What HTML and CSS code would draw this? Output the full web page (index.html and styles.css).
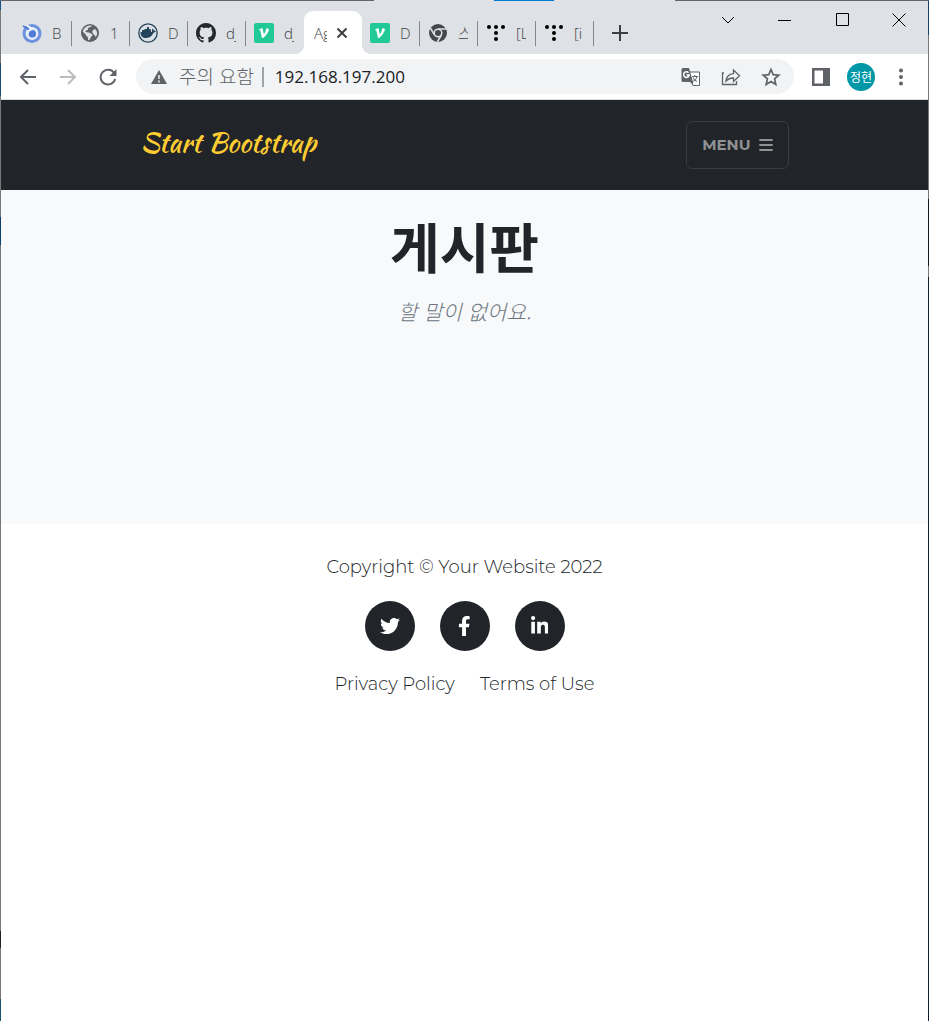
FILE: index.html
```html
<!DOCTYPE html>
<html lang="ko">
<head>
<meta charset="utf-8">
<meta name="viewport" content="width=device-width, initial-scale=1">
<title>Agency</title>
<link rel="stylesheet" href="styles.css">
</head>
<body>
<svg class="defs" aria-hidden="true">
  <symbol id="velog" viewBox="0 0 20 20"><rect width="20" height="20" rx="2" fill="#20c997"/><path d="M5.300 6.200 8.500 5l1.300 6.200c1.400-1.700 2.100-3 2-4.100-.1-1 .5-1.900 1.500-1.900 1.200 0 1.800.8 1.500 2.100-.5 2.400-2.700 5.100-5.600 7.700l-1.200.1-1.700-7.900-1.200.1z" fill="#fff"/></symbol>
  <symbol id="tistory" viewBox="0 0 20 20"><g fill="#000"><circle cx="3" cy="4" r="2"/><circle cx="10" cy="4" r="2"/><circle cx="17" cy="4" r="2"/><circle cx="10" cy="10" r="2"/><circle cx="10" cy="16" r="2"/></g></symbol>
</svg>
<div class="window">
  <header class="tabstrip">
    <nav class="tabs" aria-label="Tabs">
      <div class="tab divided"><svg viewBox="0 0 20 20" fill="none"><circle cx="10" cy="10.500" r="8" stroke="#6c92df" stroke-width="3"/><circle cx="10" cy="10.500" r="6" fill="#e8effc"/><path d="M7.500 8.500l3-1.500a3.800 3.800 0 1 1-4 4.500z" fill="#4f7bd6"/><path d="M1 3l6 3.500" stroke="#4f7bd6" stroke-width="2"/><path d="M9 5L5 2.500" stroke="#fff" stroke-width="1.500"/></svg><span>B</span></div>
      <div class="tab divided"><svg viewBox="0 0 20 20"><circle cx="10" cy="10" r="9" fill="#5f6368"/><path d="M12 2.800c-1 2-4 1-4 3.200 0 2-2.500.8-2.500 2.500 0 1.200 3.200.3 4.500 1.500s2.500.6 2.500 2-2 1.500-2 3-1.500 2-2.500 2.300V15c0-1.500-2-1.500-2-3L2.800 8.500a7.500 7.500 0 0 1 9.200-5.700zM14 6.500c1.500-.8 2.200.5 3 2.500.3 2 .2 3-1.500 5-.4-2-1.500-2-2.500-3.500s-1-3 1-4z" fill="#dee1e6"/></svg><span>1</span></div>
      <div class="tab divided"><svg viewBox="0 0 20 20"><circle cx="10" cy="10" r="9.200" fill="none" stroke="#24445c" stroke-width="1.300"/><path d="M2.500 9h11c.8-.2.800-1.500.3-2.500l.8-.8c1 .6 1.200 1.300 1.300 2 .8-.2 1.500 0 2 .4-.4 1-1.200 1.500-2.500 1.600C14 13.500 11.500 15 8 15c-3.600 0-5.500-2-5.500-6zM4 7h9v2H4zM6.500 6h6v1h-6zM9 4h2v2H9z" fill="#24445c"/></svg><span>D</span></div>
      <div class="tab divided"><svg viewBox="0 0 16 16"><path fill="#24292f" d="M8 0C3.580 0 0 3.580 0 8c0 3.540 2.290 6.530 5.470 7.590.4.070.55-.17.55-.38 0-.19-.01-.82-.01-1.490-2.010.37-2.530-.49-2.690-.94-.09-.23-.48-.94-.82-1.130-.28-.15-.68-.52-.01-.53.63-.01 1.080.58 1.230.82.72 1.210 1.870.87 2.330.66.070-.52.28-.87.51-1.070-1.780-.2-3.640-.89-3.640-3.950 0-.87.31-1.590.82-2.150-.08-.2-.36-1.020.08-2.120 0 0 .67-.21 2.200.82.64-.18 1.320-.27 2-.27s1.360.09 2 .27c1.530-1.040 2.200-.82 2.200-.82.44 1.100.16 1.920.08 2.120.51.56.82 1.270.82 2.150 0 3.070-1.870 3.750-3.650 3.950.29.25.54.73.54 1.480 0 1.070-.01 1.930-.01 2.200 0 .21.15.46.55.38A8.010 8.010 0 0 0 16 8c0-4.420-3.580-8-8-8z"/></svg><span>dj</span></div>
      <div class="tab"><svg><use href="#velog"/></svg><span>dj</span></div>
      <div class="tab active"><span>Ag</span><button type="button" aria-label="Close tab"><svg class="close" viewBox="0 0 12 12"><path d="M1.500 1.500l9 9m0-9l-9 9" stroke="#3c4043" stroke-width="2"/></svg></button></div>
      <div class="tab divided"><svg><use href="#velog"/></svg><span>D</span></div>
      <div class="tab divided"><svg viewBox="0 0 20 20"><circle cx="10" cy="10" r="9" fill="#45494d"/><circle cx="10" cy="10" r="3.800" fill="none" stroke="#dee1e6" stroke-width="1.500"/><path d="M10 6h8.300M6.600 12L2.300 5M13.400 12l-4.100 7" stroke="#dee1e6" stroke-width="1.500"/></svg><span>스</span></div>
      <div class="tab divided"><svg><use href="#tistory"/></svg><span>[L</span></div>
      <div class="tab divided"><svg><use href="#tistory"/></svg><span>[i</span></div>
      <button type="button" class="newtab" aria-label="New tab"><svg viewBox="0 0 16 16"><path d="M8 0v16M0 8h16" stroke="#3c4043" stroke-width="2"/></svg></button>
    </nav>
    <div class="controls">
      <button type="button" aria-label="Search tabs"><svg viewBox="0 0 14 14"><path d="M1 4l6 6 6-6"/></svg></button>
      <button type="button" aria-label="Minimize"><svg viewBox="0 0 14 14"><path d="M0 7.500h13"/></svg></button>
      <button type="button" aria-label="Maximize"><svg viewBox="0 0 14 14"><path d="M1.500.5h12v12h-12z"/></svg></button>
      <button type="button" aria-label="Close"><svg viewBox="0 0 14 14"><path d="M.5.5l13 13m0-13l-13 13"/></svg></button>
    </div>
  </header>
  <div class="toolbar">
    <div class="history">
      <button type="button" aria-label="Back"><svg viewBox="0 0 18 18"><path d="M17 9H2M9 2L2 9l7 7" fill="none" stroke="#5f6368" stroke-width="2"/></svg></button>
      <button type="button" aria-label="Forward" disabled><svg viewBox="0 0 18 18"><path d="M1 9h15M9 2l7 7-7 7" fill="none" stroke="#babcbe" stroke-width="2"/></svg></button>
      <button type="button" aria-label="Reload"><svg viewBox="0 0 18 18"><path d="M15.200 5A7.400 7.400 0 1 0 16.200 11" fill="none" stroke="#5f6368" stroke-width="2"/><path d="M17.500 1v7h-7z" fill="#5f6368"/></svg></button>
    </div>
    <div class="address">
      <svg class="warn" viewBox="0 0 16 14"><path d="M8 0l8 14H0z" fill="#5f6368"/><path d="M8 5v4M8 10.500v2" stroke="#f1f3f4" stroke-width="1.500"/></svg>
      <label for="url">주의 요함</label>
      <input id="url" type="text" value="192.168.197.200">
      <button type="button" aria-label="Translate"><svg viewBox="0 0 20 20"><path d="M8 5h10.500v13.500H12L8 5z" fill="#fff" stroke="#5f6368"/><path d="M2 1h6l4 14H2a1.500 1.500 0 0 1-1.500-1.500v-11A1.500 1.500 0 0 1 2 1z" fill="#5f6368"/><path d="M7.500 5.700A2.800 2.800 0 1 0 8.200 8H5.500" fill="none" stroke="#fff" stroke-width="1.500"/><path d="M11 9.500h6M13.800 8v1.500M16 9.500q-1 4-4 5M12 10.500q1 3 4 4" fill="none" stroke="#5f6368"/><path d="M9 15h3v3z" fill="#5f6368"/></svg></button>
      <button type="button" aria-label="Share"><svg viewBox="0 0 20 20"><path d="M3 6H1.500v11.500h14V14M5 14c.5-4.500 3-7 7.500-7.300V3l6 5.800-6 5.700V11C9 10.900 6.800 12 5 14z" fill="none" stroke="#5f6368" stroke-width="1.300"/></svg></button>
      <button type="button" aria-label="Bookmark"><svg viewBox="0 0 20 20"><path d="M10 2.500l2.200 5.200 5.600.5-4.200 3.700 1.200 5.500-4.800-2.900-4.800 2.900 1.200-5.500-4.200-3.700 5.600-.5z" fill="none" stroke="#5f6368" stroke-width="1.700"/></svg></button>
    </div>
    <div class="tools">
      <button type="button" aria-label="Side panel"><svg viewBox="0 0 18 18"><path d="M0 0h18v18H0zM2.500 2.500v13H11v-13z" fill="#5f6368" fill-rule="evenodd"/></svg></button>
      <button type="button" class="avatar">정현</button>
      <button type="button" aria-label="More"><svg viewBox="0 0 18 18" fill="#5f6368"><circle cx="9" cy="2.500" r="2"/><circle cx="9" cy="9" r="2"/><circle cx="9" cy="15.500" r="2"/></svg></button>
    </div>
  </div>
  <main class="page">
    <nav class="navbar">
      <div class="container">
        <a class="brand" href="#">Start Bootstrap</a>
        <button type="button" class="menu">MENU <svg viewBox="0 0 14 14"><path d="M1 2h12M1 7h12M1 12h12" stroke="currentColor" stroke-width="1.800" stroke-linecap="round"/></svg></button>
      </div>
    </nav>
    <section class="board">
      <h1>게시판</h1>
      <p>할 말이 없어요.</p>
    </section>
    <footer class="footer">
      <p>Copyright © Your Website 2022</p>
      <div class="social">
        <a href="#" aria-label="Twitter"><svg viewBox="0 0 512 512"><path d="M459.370 151.716c.325 4.548.325 9.097.325 13.645 0 138.720-105.583 298.558-298.558 298.558-59.452 0-114.680-17.219-161.137-47.106 8.447.974 16.568 1.299 25.340 1.299 49.055 0 94.213-16.568 130.274-44.832-46.132-.975-84.792-31.188-98.112-72.772 6.498.974 12.995 1.624 19.818 1.624 9.421 0 18.843-1.300 27.614-3.573-48.081-9.747-84.143-51.980-84.143-102.985v-1.299c13.969 7.797 30.214 12.670 47.431 13.319-28.264-18.843-46.781-51.005-46.781-87.391 0-19.492 5.197-37.360 14.294-52.954 51.655 63.675 129.300 105.258 216.365 109.807-1.624-7.797-2.599-15.918-2.599-24.040 0-57.828 46.782-104.934 104.934-104.934 30.213 0 57.502 12.670 76.670 33.137 23.715-4.548 46.456-13.320 66.599-25.340-7.798 24.366-24.366 44.833-46.132 57.827 21.117-2.273 41.584-8.122 60.426-16.243-14.292 20.791-32.161 39.308-52.628 54.253z"/></svg></a>
        <a href="#" aria-label="Facebook"><svg viewBox="0 0 320 512"><path d="M279.140 288l14.220-92.660h-88.910v-60.130c0-25.350 12.420-50.060 52.240-50.060h40.420V6.260S260.430 0 225.360 0c-73.220 0-121.080 44.380-121.080 124.720v70.620H22.890V288h81.390v224h100.170V288z"/></svg></a>
        <a href="#" aria-label="LinkedIn"><svg viewBox="0 0 448 512"><path d="M100.280 448H7.400V148.900h92.880zM53.790 108.100C24.090 108.100 0 83.500 0 53.800a53.790 53.790 0 0 1 107.580 0c0 29.700-24.100 54.300-53.790 54.300zM447.900 448h-92.680V302.400c0-34.700-.7-79.200-48.290-79.200-48.290 0-55.690 37.700-55.690 76.700V448h-92.780V148.900h89.080v40.800h1.300c12.400-23.500 42.690-48.300 87.880-48.300 94 0 111.280 61.900 111.280 142.300V448z"/></svg></a>
      </div>
      <div class="legal"><a href="#">Privacy Policy</a><a href="#">Terms of Use</a></div>
    </footer>
  </main>
</div>
</body>
</html>
```
FILE: styles.css
```css
* { box-sizing: border-box; }
body {
  margin: 0;
  font-family: "Open Sans", "Noto Sans CJK KR", sans-serif;
  color: #212529;
}
button { padding: 0; border: 0; background: none; font: inherit; color: inherit; display: grid; place-items: center; }
a { color: inherit; text-decoration: none; }
svg { display: block; flex: none; }
.defs { position: absolute; width: 0; height: 0; }

.window {
  min-height: 100vh;
  padding: 1px;
  padding-bottom: 0;
  display: flex;
  flex-direction: column;
  background:
    linear-gradient(90deg, #666 374px, #e4e4e4 374px 494px, #0078d7 494px 554px, #e4e4e4 554px 675px, #666 675px) top / 100% 1px no-repeat,
    linear-gradient(#17507c 10px, #777 10px 63px, #17507c 63px 96px, #777 96px 217px, #0d416b 217px 245px, #777 245px 931px, #222 931px 948px, #777 948px 999px, #17566f 999px) left / 1px 100% no-repeat,
    linear-gradient(#173f6b 35px, #777 35px 199px, #111a22 199px 266px, #777 266px 277px, #0c1d30 277px) right / 1px 100% no-repeat;
}

.tabstrip { display: flex; justify-content: space-between; height: 53px; background: #dee1e6; }
.tabs { display: flex; padding: 10px 0 0 13px; }
.tab { position: relative; width: 58px; padding-left: 8px; display: flex; align-items: center; gap: 10px; font-size: 15px; font-weight: 300; color: #3c4043; }
.tab svg { width: 20px; height: 20px; }
.tab span { width: 10px; overflow: hidden; white-space: nowrap; line-height: 20px; }
.divided::after { content: ""; position: absolute; right: 0; top: 10px; width: 1px; height: 25px; background: #85888d; }
.tab.active { gap: 9px; padding-left: 10px; background: #fff; border-radius: 9px 9px 0 0; }
.tab.active span { width: 13px; }
.tab.active::before, .tab.active::after { content: ""; position: absolute; bottom: 0; width: 9px; height: 9px; }
.tab.active::before { right: 100%; background: radial-gradient(circle at 0 0, transparent 9px, #fff 9px); }
.tab.active::after { left: 100%; background: radial-gradient(circle at 100% 0, transparent 9px, #fff 9px); }
.tab svg.close { width: 12px; height: 12px; }
.newtab { width: 52px; }
.newtab svg { width: 16px; height: 16px; }
.controls { display: flex; height: 37px; padding-right: 1px; }
.controls button { width: 57px; }
.controls svg { width: 14px; height: 14px; fill: none; stroke: #000; }

.toolbar { display: flex; align-items: center; height: 46px; background: #fff; border-bottom: 1px solid #dadce0; }
.history { display: flex; padding: 0 8px 0 7px; }
.history button { width: 40px; }
.history svg { width: 18px; height: 18px; }
.address { flex: 1; min-width: 0; height: 35px; display: flex; align-items: center; padding: 0 3px 0 15px; background: #f1f3f4; border-radius: 18px; font-size: 17px; }
.address .warn { width: 16px; height: 14px; margin-right: 12px; }
.address label { font-size: 19px; font-weight: 300; color: #5f6368; line-height: 20px; padding-right: 8px; border-right: 2px solid #a0a3a7; }
.address input { flex: 1; min-width: 0; padding: 0 0 0 11px; border: 0; background: none; font: inherit; color: #202124; outline: none; }
.address button { width: 40px; }
.address button svg { width: 20px; height: 20px; }
.tools { display: flex; align-items: center; padding: 0 7px; }
.tools button { width: 40px; }
.tools svg { width: 18px; height: 18px; }
.tools .avatar { width: 28px; height: 28px; margin: 0 6px; border-radius: 50%; background: #0097a7; color: #fff; font-size: 12px; }

.page { flex: 1; background: #fff; text-align: center; }
.navbar { background: #212529; padding: 21px 0; }
.container { max-width: 648px; margin: 0 auto; display: flex; justify-content: space-between; align-items: center; }
.brand { padding-bottom: 4px; font: 400 27px/36px "Kaushan Script", Lato, sans-serif; color: #ffcd32; }
.menu { display: flex; align-items: center; gap: 8px; height: 48px; padding: 0 15px; border: 1px solid #383b3f; border-radius: 6px; font: 700 15px/24px Montserrat, Inter, sans-serif; color: #909294; }
.menu svg { width: 14px; height: 14px; }
.board { min-height: 334px; padding: 20px 16px; background: #f8f9fb; }
.board h1 { margin: 0; font: 700 54px/72px "Noto Sans CJK KR", sans-serif; }
.board p { margin: 14px 0 0; font: italic 300 21px/30px "Noto Sans CJK KR", sans-serif; color: #6c757d; }
.footer { padding: 31px 16px; font: 300 18px/24px Montserrat, Inter, sans-serif; }
.footer p { margin: 0 0 22px; }
.social { display: flex; justify-content: center; gap: 25px; margin-bottom: 21px; }
.social a { width: 50px; height: 50px; border-radius: 50%; display: grid; place-items: center; background: #212529; }
.social svg { height: 20px; fill: #fff; }
.legal { display: flex; justify-content: center; gap: 25px; }
```
